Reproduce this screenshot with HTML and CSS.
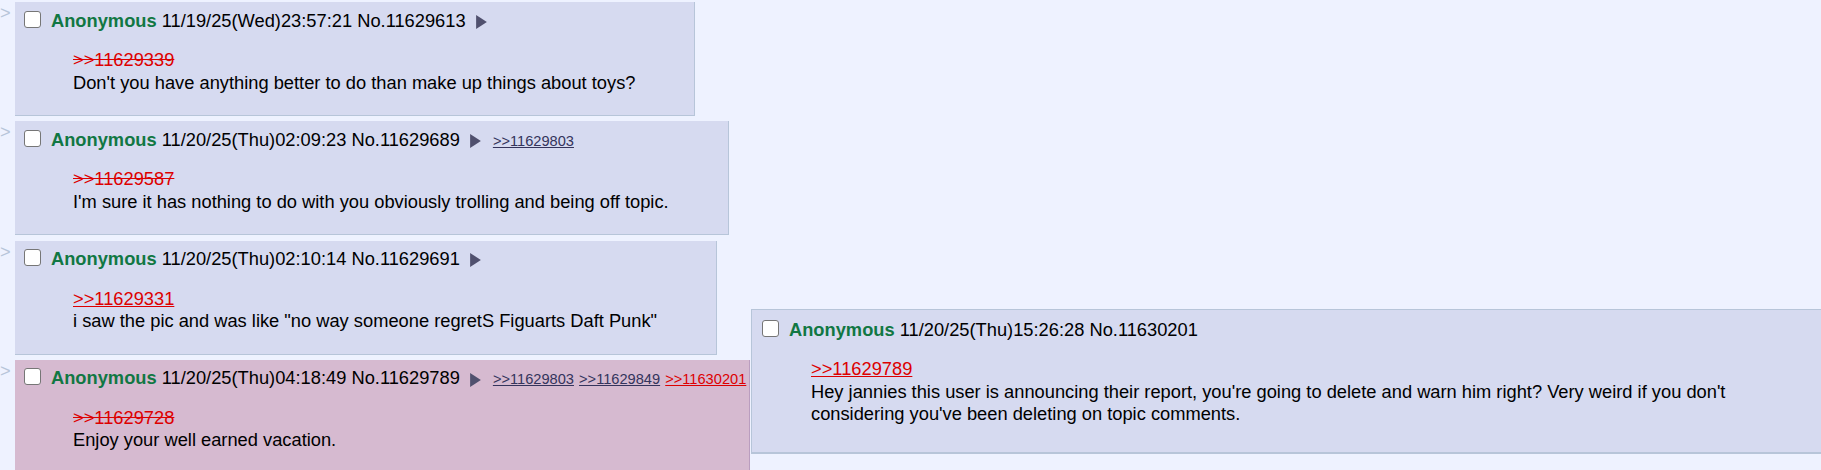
FILE: index.html
```html
<!DOCTYPE html>
<html lang="en">
<head>
  <meta charset="UTF-8" />
  <title>Thread</title>
  <link rel="stylesheet" href="styles.css">
</head>
<body>

  <div class="thread">

    <div class="row">
      <div class="arrow">&gt;</div>
      <div class="post">
        <div class="info">
          <input type="checkbox" class="check">
          <span class="meta"><span class="name">Anonymous</span> 11/19/25(Wed)23:57:21 No.11629613<svg class="menu" viewBox="0 0 10 13"><path d="M0 0L10 6.5L0 13Z"/></svg></span>
        </div>
        <blockquote class="msg">
          <a class="quote dead" href="#p11629339">&gt;&gt;11629339</a><br>
          Don't you have anything better to do than make up things about toys?
        </blockquote>
      </div>
    </div>

    <div class="row">
      <div class="arrow">&gt;</div>
      <div class="post">
        <div class="info">
          <input type="checkbox" class="check">
          <span class="meta"><span class="name">Anonymous</span> 11/20/25(Thu)02:09:23 No.11629689<svg class="menu" viewBox="0 0 10 13"><path d="M0 0L10 6.5L0 13Z"/></svg><a class="backlink" href="#p11629803">&gt;&gt;11629803</a></span>
        </div>
        <blockquote class="msg">
          <a class="quote dead" href="#p11629587">&gt;&gt;11629587</a><br>
          I'm sure it has nothing to do with you obviously trolling and being off topic.
        </blockquote>
      </div>
    </div>

    <div class="row">
      <div class="arrow">&gt;</div>
      <div class="post">
        <div class="info">
          <input type="checkbox" class="check">
          <span class="meta"><span class="name">Anonymous</span> 11/20/25(Thu)02:10:14 No.11629691<svg class="menu" viewBox="0 0 10 13"><path d="M0 0L10 6.5L0 13Z"/></svg></span>
        </div>
        <blockquote class="msg">
          <a class="quote" href="#p11629331">&gt;&gt;11629331</a><br>
          i saw the pic and was like "no way someone regretS Figuarts Daft Punk"
        </blockquote>
      </div>
    </div>

    <div class="row">
      <div class="arrow">&gt;</div>
      <div class="post hl">
        <div class="info">
          <input type="checkbox" class="check">
          <span class="meta"><span class="name">Anonymous</span> 11/20/25(Thu)04:18:49 No.11629789<svg class="menu" viewBox="0 0 10 13"><path d="M0 0L10 6.5L0 13Z"/></svg><a class="backlink" href="#p11629803">&gt;&gt;11629803</a> <a class="backlink" href="#p11629849">&gt;&gt;11629849</a> <a class="backlink hover" href="#p11630201">&gt;&gt;11630201</a></span>
        </div>
        <blockquote class="msg">
          <a class="quote dead" href="#p11629728">&gt;&gt;11629728</a><br>
          Enjoy your well earned vacation.
        </blockquote>
      </div>
    </div>

  </div>

  <!-- hover preview for >>11630201 -->
  <div class="post preview">
    <div class="info">
      <input type="checkbox" class="check">
      <span class="meta"><span class="name">Anonymous</span> 11/20/25(Thu)15:26:28 No.11630201</span>
    </div>
    <blockquote class="msg">
      <a class="quote" href="#p11629789">&gt;&gt;11629789</a><br>
      Hey jannies this user is announcing their report, you're going to delete and warn him right? Very weird if you don't considering you've been deleting on topic comments.
    </blockquote>
  </div>

</body>
</html>
```

FILE: styles.css
```css
:root {
  --bg: #eef2ff;
  --reply: #d6daf0;
  --border: #b7c5d9;
  --name: #117743;
  --link: #34345c;
  --quote: #dd0000;
}
html, body {
  margin: 0;
  overflow: hidden;
}
body {
  background: var(--bg);
  color: #000;
  font-family: "Liberation Sans", Arial, sans-serif;
  font-size: 18.3px;
}

.thread {
  display: flex;
  flex-direction: column;
  align-items: flex-start;
  gap: 5.3px;
  padding-top: 2px;
}
.row {
  display: flex;
  align-items: flex-start;
}
.arrow {
  width: 15px;
  color: var(--border);
}

/* Reply boxes */
.post {
  background: var(--reply);
  border-right: 1px solid var(--border);
  border-bottom: 1px solid var(--border);
  padding: 3px;
}
.post.hl {
  background: #d6bad0;
  border-color: #ba9dbf;
}

.info {
  display: flex;
  align-items: center;
  height: 29px;
  padding-top: 1px;
  white-space: nowrap;
}
.check {
  appearance: none;
  box-sizing: border-box;
  width: 17px;
  height: 17px;
  margin: 0 10px 3px 6px;
  border: 1.5px solid #767676;
  border-radius: 3px;
  background: #fff;
}
.name {
  color: var(--name);
  font-weight: bold;
}
.menu {
  width: 11px;
  height: 14px;
  margin: 0 12px 0 10px;
  vertical-align: middle;
  fill: #50506e;
}
.backlink {
  font-size: 0.8em;
  color: var(--link);
}
.backlink.hover {
  color: var(--quote);
}

.msg {
  margin: 14px 56px 18px 55px;
  line-height: 22.5px;
}
.quote {
  color: var(--quote);
  text-decoration: underline;
}
.quote.dead {
  text-decoration: line-through;
}

/* Quote preview floating over the thread */
.preview {
  position: absolute;
  left: 751px;
  top: 309px;
  width: 1125px;
  border: 1px solid var(--border);
  border-bottom-width: 2px;
  padding: 4px 4px 8px;
}
.preview .msg {
  max-width: 950px;
}
```
